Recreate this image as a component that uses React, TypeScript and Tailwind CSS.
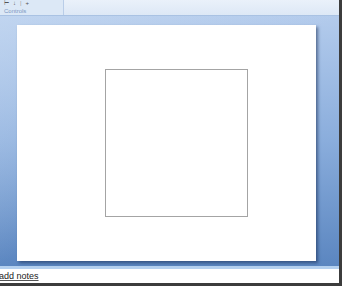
export default function App() {
  return (
    <div className="w-[342px] h-[286px] overflow-hidden bg-[#3c3c3c] font-['Liberation_Sans',sans-serif]">
      <div className="w-[339px] h-[283px] flex flex-col bg-white">
        {/* Ribbon strip */}
        <div className="h-4 flex border-b border-[#a9c2e3]">
          <div className="w-16 flex flex-col bg-[#dce8f6] border-r border-[#b9cde8]">
            <div className="h-2 flex items-start gap-1 pl-1 text-[6px] leading-[6px] text-[#555]">
              <span>⊢</span>
              <span>↓</span>
              <span className="text-[#999]">|</span>
              <span>+</span>
            </div>
            <div className="h-[7px] pl-1 text-[6px] leading-[7px] text-[#7a97c2]">Controls</div>
          </div>
          <div className="flex-1 bg-gradient-to-b from-[#eaf1fa] to-[#dde8f6]" />
        </div>

        {/* Slide area */}
        <div className="h-[250px] relative flex flex-col pt-[9px] pl-[17px] bg-gradient-to-b from-[#b3cbec] via-[#8aaddc] to-[#5b86c0]">
          <div className="absolute inset-0 bg-gradient-to-br from-[#c9dbf2]/60 via-transparent to-transparent" />
          <div className="relative w-[299px] h-[236px] bg-white shadow-[2px_2px_3px_rgba(20,40,80,0.55)] pl-[88px] pt-[44px]">
            <div className="w-[143px] h-[148px] border border-[#a4a4a4]" />
          </div>
        </div>

        {/* Notes */}
        <div className="h-[3px] bg-[#b4d0ef]" />
        <div className="h-[14px] bg-white pt-[2px] -ml-px text-[9px] leading-[11px] text-[#222]">
          <span className="underline decoration-[#555]">add notes</span>
        </div>
      </div>
    </div>
  );
}
